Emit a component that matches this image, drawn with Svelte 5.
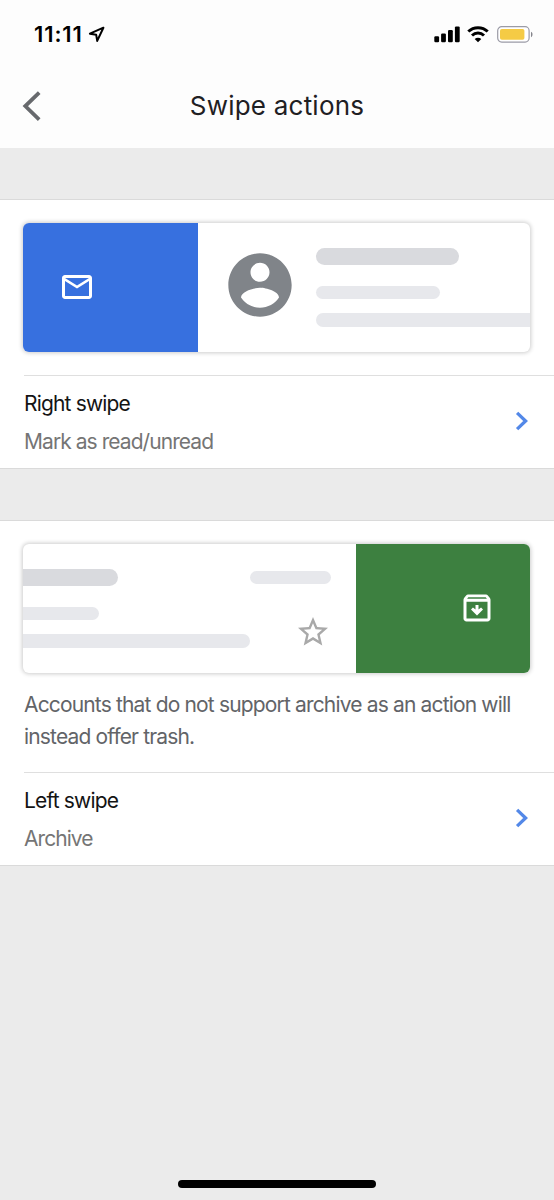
<script lang="ts">
	let time = $state('11:11');

	const right = { title: 'Right swipe', action: 'Mark as read/unread' };
	const left = { title: 'Left swipe', action: 'Archive' };
</script>

{#snippet row(item: { title: string; action: string }, name: string)}
	<button class="row {name}">
		<span class="labels">
			<span class="label">{item.title}</span>
			<span class="value">{item.action}</span>
		</span>
		<svg class="chevron" width="14" height="20" viewBox="0 0 14 20">
			<path d="M2.1 1.9 10.6 10l-8.5 8.1" fill="none" stroke="#5388e8" stroke-width="3.3" />
		</svg>
	</button>
{/snippet}

<div class="screen">
	<div class="status">
		<span class="time">{time}</span>
		<svg class="location" width="17" height="17" viewBox="0 0 17 17">
			<path d="M15.4 1.7 1.9 7.7l6.300 1.100 1 6.100z" fill="none" stroke="#000" stroke-width="2" stroke-linejoin="round" />
		</svg>
		<svg class="signal" width="27" height="17" viewBox="0 0 27 17">
			<rect x="0.3" y="10.2" width="4.8" height="6" rx="1.2" />
			<rect x="7.1" y="7.4" width="4.8" height="8.8" rx="1.2" />
			<rect x="14" y="4" width="4.8" height="12.2" rx="1.2" />
			<rect x="20.9" y="0.4" width="4.8" height="15.8" rx="1.2" />
		</svg>
		<svg class="wifi" width="22" height="17" viewBox="0 0 22 17">
			<path d="M1.3 5.5c5.4-5.1 14-5.1 19.4 0M5 9.5c3.4-3.2 8.6-3.2 12 0" fill="none" stroke="#000" stroke-width="3" />
			<path d="M11 16.2 7.7 12.9c1.9-1.7 4.7-1.7 6.6 0z" />
		</svg>
		<svg class="battery" width="37" height="17" viewBox="0 0 37 17">
			<rect x="0.7" y="0.7" width="31.4" height="15.4" rx="4" fill="#fff" stroke="#9b9ba6" stroke-width="1.2" />
			<rect x="3" y="3" width="24.4" height="10.8" rx="1.8" fill="#f5cb45" />
			<path d="M34 5.8c2 .8 2 4.6 0 5.4z" fill="#85858c" />
		</svg>
	</div>

	<header>
		<svg class="back" width="20" height="32" viewBox="0 0 20 32">
			<path d="M17.2 2.6 3.3 16.1l13.9 13.5" fill="none" stroke="#67696d" stroke-width="3.8" />
		</svg>
		<h1>Swipe actions</h1>
	</header>

	<section>
		<div class="card">
			<div class="swipe blue">
				<svg width="36" height="36" viewBox="0 0 24 24">
					<path fill="#fff" d="M20 4H4c-1.1 0-2 .9-2 2v12c0 1.1.9 2 2 2h16c1.1 0 2-.9 2-2V6c0-1.1-.9-2-2-2zm0 14H4V8l8 5 8-5v10zm-8-7L4 6h16l-8 5z" />
				</svg>
			</div>
			<svg class="avatar" width="76" height="76" viewBox="0 0 24 24">
				<path fill="#808489" d="M12 2C6.48 2 2 6.48 2 12s4.48 10 10 10 10-4.48 10-10S17.52 2 12 2zm0 3c1.66 0 3 1.34 3 3s-1.34 3-3 3-3-1.34-3-3 1.34-3 3-3zm0 14.2c-2.5 0-4.71-1.28-6-3.22.03-1.99 4-3.08 6-3.08 1.99 0 5.97 1.09 6 3.08-1.29 1.94-3.5 3.22-6 3.22z" />
			</svg>
			<div class="lines">
				<i class="line sender"></i>
				<i class="line subject"></i>
				<i class="line body"></i>
			</div>
		</div>
		{@render row(right, 'first')}
	</section>

	<section>
		<div class="card">
			<div class="lines cut">
				<i class="line sender"></i>
				<i class="line subject"></i>
				<i class="line body"></i>
			</div>
			<div class="meta">
				<i class="line date"></i>
				<svg width="36" height="36" viewBox="0 0 24 24">
					<path fill="#a9a9a9" d="M22 9.24l-7.19-.62L12 2 9.19 8.63 2 9.24l5.46 4.73L5.82 21 12 17.27 18.18 21l-1.63-7.03L22 9.24zM12 15.4l-3.76 2.27 1-4.28-3.32-2.88 4.38-.38L12 6.1l1.71 4.04 4.38.38-3.32 2.88 1 4.28L12 15.4z" />
				</svg>
			</div>
			<div class="swipe green">
				<svg width="36" height="36" viewBox="0 0 24 24">
					<path fill="#fff" fill-rule="evenodd" d="M20.5 5.2l-1.4-1.7C18.9 3.2 18.5 3 18 3H6c-.5 0-.9.2-1.1.5L3.5 5.2C3.2 5.6 3 6 3 6.500V19c0 1.1.9 2 2 2h14c1.1 0 2-.9 2-2V6.500c0-.5-.2-.9-.5-1.300zM6.200 4.900h11.600l.8 1H5.400zM5 19V7.900h14V19z" />
					<path fill="#fff" d="M11 10h2v3l1.700-1.300 1.300 1.300-4 4-4-4 1.300-1.300L11 13z" />
				</svg>
			</div>
		</div>
		<p>Accounts that do not support archive as an action will instead offer trash.</p>
		{@render row(left, 'last')}
	</section>

	<div class="home"></div>
</div>

<style>
	:global(body) {
		margin: 0;
		background: #ebebeb;
	}

	.screen {
		width: 554px;
		height: 1200px;
		display: flex;
		flex-direction: column;
		background: #ebebeb;
		font-family: Inter, "Liberation Sans", sans-serif;
		overflow: hidden;
	}

	.screen * {
		box-sizing: border-box;
	}

	svg {
		display: block;
		flex: none;
	}

	.status {
		height: 68px;
		display: flex;
		align-items: center;
		padding: 0 20px 0 34px;
		background: #fdfdfd;
	}

	.time {
		width: 50px;
		font-size: 22px;
		font-weight: 600;
		letter-spacing: 0.9px;
		white-space: nowrap;
	}

	.location {
		margin-left: 4px;
	}

	.signal {
		margin-left: auto;
	}

	.wifi {
		margin-left: 6px;
	}

	.battery {
		margin-left: 8px;
	}

	header {
		height: 80px;
		display: grid;
		grid-template-columns: 54px 1fr 54px;
		align-items: center;
		padding-bottom: 4px;
		background: #fdfdfd;
	}

	.back {
		margin-left: 22px;
	}

	h1 {
		margin: 0;
		padding-bottom: 2px;
		font-size: 26px;
		font-weight: 400;
		letter-spacing: 0.22px;
		text-align: center;
		color: #1f2023;
	}

	section {
		margin-top: 51px;
		padding-top: 23px;
		border-top: 1px solid #dadada;
		border-bottom: 1px solid #dadada;
		background: #fff;
	}

	.card {
		height: 128.5px;
		margin: 0 23.6px 0 23.4px;
		display: flex;
		border-radius: 6px;
		background: #fff;
		box-shadow: 0 0 4px 1px rgba(0, 0, 0, 0.2);
		overflow: hidden;
	}

	.swipe {
		width: 174.5px;
		flex: none;
		display: flex;
		align-items: center;
	}

	.blue {
		padding-left: 35.5px;
		background: #3770df;
	}

	.green {
		justify-content: flex-end;
		padding-right: 35.5px;
		background: #3d8040;
	}

	.avatar {
		margin: 24px 18px 0 24px;
	}

	.lines {
		flex: 1;
		padding-top: 25px;
	}

	.line {
		display: block;
		height: 13.5px;
		border-radius: 7px;
		background: #e7e8ec;
	}

	.sender {
		width: 143.5px;
		height: 17px;
		border-radius: 9px;
		background: #d9dade;
	}

	.subject {
		width: 124px;
		margin-top: 20.5px;
	}

	.body {
		width: 260px;
		margin-top: 14px;
	}

	.cut .line {
		border-top-left-radius: 0;
		border-bottom-left-radius: 0;
	}

	.cut .sender {
		width: 95px;
	}

	.cut .subject {
		width: 76px;
	}

	.cut .body {
		width: 226.5px;
	}

	.meta {
		width: 106px;
		flex: none;
		padding-top: 26.5px;
	}

	.date {
		width: 81px;
	}

	.meta svg {
		margin: 30px 0 0 45px;
	}

	.row {
		width: 530px;
		height: 93px;
		margin: 23.5px 0 0 24px;
		padding: 0 25px 2px 0;
		display: flex;
		align-items: center;
		justify-content: space-between;
		border: 0;
		border-top: 1px solid #dfdfdf;
		background: none;
		font: inherit;
		text-align: left;
	}

	.labels {
		display: flex;
		flex-direction: column;
		padding-top: 3px;
	}

	.label,
	.value {
		font-size: 21px;
		line-height: 38px;
		white-space: nowrap;
	}

	.label {
		letter-spacing: -0.83px;
		color: #141414;
	}

	.value {
		letter-spacing: -0.94px;
		color: #757575;
	}

	p {
		width: 510px;
		margin: 16.5px 0 0 24px;
		font-size: 21px;
		line-height: 32px;
		letter-spacing: -0.84px;
		color: #626468;
	}

	.last {
		margin-top: 19px;
	}

	.home {
		width: 198px;
		height: 8px;
		margin: auto auto 12px;
		border-radius: 4px;
		background: #000;
	}
</style>
